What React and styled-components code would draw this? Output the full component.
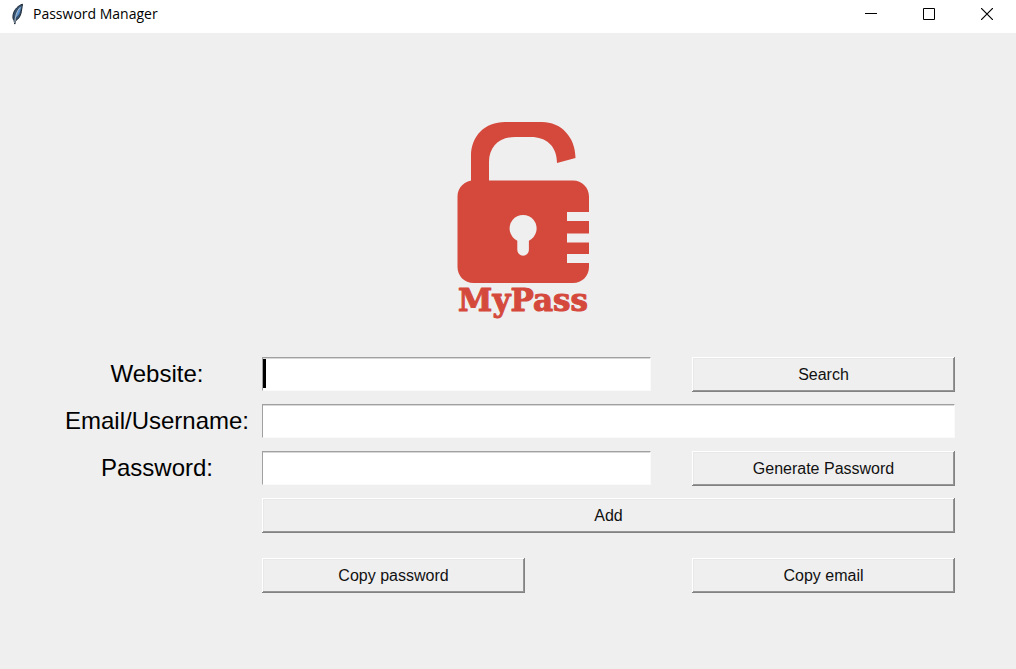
import React from "react";
import styled, { createGlobalStyle } from "styled-components";

const GlobalStyle = createGlobalStyle`
  *, *::before, *::after { box-sizing: border-box; }
  body { margin: 0; background: #efefef; }
`;

const Window = styled.div`
  min-height: 100vh;
  display: flex;
  flex-direction: column;
  background: #efefef;
  color: #000;
  font-family: "Liberation Sans", Arial, sans-serif;
`;

const TitleBar = styled.header`
  display: flex;
  align-items: flex-start;
  justify-content: space-between;
  height: 33px;
  padding-left: 10px;
  background: #fff;
`;

const TitleGroup = styled.div`
  display: flex;
  align-items: center;
  gap: 8px;
  height: 28px;
`;

const Title = styled.h1`
  margin: 0;
  font: 400 14px/20px "Open Sans", "Noto Sans", sans-serif;
`;

const WindowControls = styled.div`
  display: flex;
`;

const ControlButton = styled.button`
  display: flex;
  align-items: center;
  justify-content: center;
  width: 58px;
  height: 28px;
  padding: 0;
  border: 0;
  background: transparent;
  color: #000;
`;

const Content = styled.main`
  display: flex;
  flex-direction: column;
  gap: 36px;
  padding: 88px 61px 40px 62px;
`;

const LogoArea = styled.div`
  display: flex;
  justify-content: center;
  padding-left: 28px;
`;

const Form = styled.form`
  display: flex;
  flex-direction: column;
  gap: 12px;
`;

const Row = styled.div`
  display: grid;
  grid-template-columns: 190px minmax(0, 1fr);
  column-gap: 10px;
  align-items: start;
  min-height: 35px;
`;

const Label = styled.label`
  font-size: 24px;
  line-height: 34px;
  text-align: center;
`;

const Fields = styled.div`
  grid-column: 2;
  display: grid;
  grid-template-columns: ${({ $split }) => ($split ? "minmax(0, 1fr) 263px" : "minmax(0, 1fr)")};
  column-gap: 41px;
  align-items: start;
`;

const Actions = styled.div`
  grid-column: 2;
  display: flex;
  justify-content: space-between;
  padding-top: 13px;
`;

const InputBox = styled.div`
  position: relative;
  display: flex;
`;

const TextInput = styled.input`
  width: 100%;
  height: 34px;
  padding: 0 4px;
  border: 1px solid;
  border-color: #a0a0a0 #fafafa #fafafa #a0a0a0;
  border-radius: 0;
  outline: 0;
  background: #fff;
  box-shadow: inset 0 1px 0 #d8d8d8;
  font: 24px "Liberation Sans", Arial, sans-serif;
`;

const Caret = styled.span`
  position: absolute;
  top: 2px;
  left: 1px;
  width: 3px;
  height: 29px;
  background: #000;
`;

const PushButton = styled.button`
  width: ${({ $wide }) => ($wide ? "100%" : "263px")};
  height: 35px;
  padding: 0;
  border: 0;
  border-radius: 0;
  background: #efefef;
  box-shadow:
    inset -1px -1px 0 #828282,
    inset 1px 1px 0 #fff,
    inset -2px -2px 0 #969696,
    inset 2px 2px 0 #e8e8e8;
  color: #111;
  font: 16px/20px "Liberation Sans", Arial, sans-serif;
`;

const FeatherIcon = () => (
  <svg width="15" height="22" viewBox="0 0 15 22" aria-hidden="true">
    <path d="M12.5 1.2C8.2 2.4 4.2 6.6 3.2 11.2c-.6 2.8-.3 5 .8 6.3l.8 3.600.9-3.400c2.800-1.700 4.600-4.400 5.300-7.400.5-2.200 1.100-6.400 1.500-9.100z" fill="#36516f" stroke="#1d2733" strokeWidth="1" />
    <path d="M11.600 3.200C8.400 5 6.200 9 5.500 14.800c2.400-1.600 4-4 4.500-6.200z" fill="#5f93cc" />
    <path d="M10 4.500C6.800 8 5.200 13 4.800 20" fill="none" stroke="#a9b9c6" strokeWidth="1" />
  </svg>
);

const Logo = () => (
  <svg width="134" height="200" viewBox="456 121 134 200" role="img" aria-label="MyPass">
    <g fill="#d5493c">
      <path d="M471 185V156C471 136 485 122 505 122H542C561 122 575.500 137 575.500 158L557 163C557 146 546 137 531 137H515C499 137 489 147 489 162V185Z" />
      <path
        fillRule="evenodd"
        d="M473.500 180.500H573C582 180.500 589 187.500 589 196.500V212H567V221H589V233.500H567V242.500H589V254H567V263H589V267C589 276 582 283 573 283H473.500C464.500 283 457.500 276 457.500 267V196.500C457.500 187.500 464.500 180.500 473.500 180.500Z M517.300 240.700V250A5.800 5.800 0 0 0 528.900 250V240.700A13.500 13.500 0 1 0 517.300 240.700Z"
      />
      <text x="523" y="311" textAnchor="middle" fontFamily="DejaVu Serif, serif" fontWeight="700" fontSize="31" stroke="#d5493c" strokeWidth="1" strokeLinejoin="round">MyPass</text>
    </g>
  </svg>
);

export default function App() {
  return (
    <Window>
      <GlobalStyle />
      <TitleBar>
        <TitleGroup>
          <FeatherIcon />
          <Title>Password Manager</Title>
        </TitleGroup>
        <WindowControls>
          <ControlButton type="button" aria-label="Minimize">
            <svg width="12" height="12" viewBox="0 0 12 12"><path d="M0 5.500H12" stroke="currentColor" /></svg>
          </ControlButton>
          <ControlButton type="button" aria-label="Maximize">
            <svg width="12" height="12" viewBox="0 0 12 12"><path d="M.5.5H11.500V11.500H.5Z" fill="none" stroke="currentColor" /></svg>
          </ControlButton>
          <ControlButton type="button" aria-label="Close">
            <svg width="12" height="12" viewBox="0 0 12 12"><path d="M0 0L12 12M12 0L0 12" stroke="currentColor" strokeWidth="1.200" /></svg>
          </ControlButton>
        </WindowControls>
      </TitleBar>

      <Content>
        <LogoArea>
          <Logo />
        </LogoArea>

        <Form onSubmit={(event) => event.preventDefault()}>
          <Row>
            <Label htmlFor="website">Website:</Label>
            <Fields $split>
              <InputBox>
                <TextInput id="website" type="text" />
                <Caret />
              </InputBox>
              <PushButton type="button">Search</PushButton>
            </Fields>
          </Row>
          <Row>
            <Label htmlFor="email">Email/Username:</Label>
            <Fields>
              <InputBox>
                <TextInput id="email" type="text" />
              </InputBox>
            </Fields>
          </Row>
          <Row>
            <Label htmlFor="password">Password:</Label>
            <Fields $split>
              <InputBox>
                <TextInput id="password" type="text" />
              </InputBox>
              <PushButton type="button">Generate Password</PushButton>
            </Fields>
          </Row>
          <Row>
            <Fields>
              <PushButton type="submit" $wide>Add</PushButton>
            </Fields>
          </Row>
          <Row>
            <Actions>
              <PushButton type="button">Copy password</PushButton>
              <PushButton type="button">Copy email</PushButton>
            </Actions>
          </Row>
        </Form>
      </Content>
    </Window>
  );
}
